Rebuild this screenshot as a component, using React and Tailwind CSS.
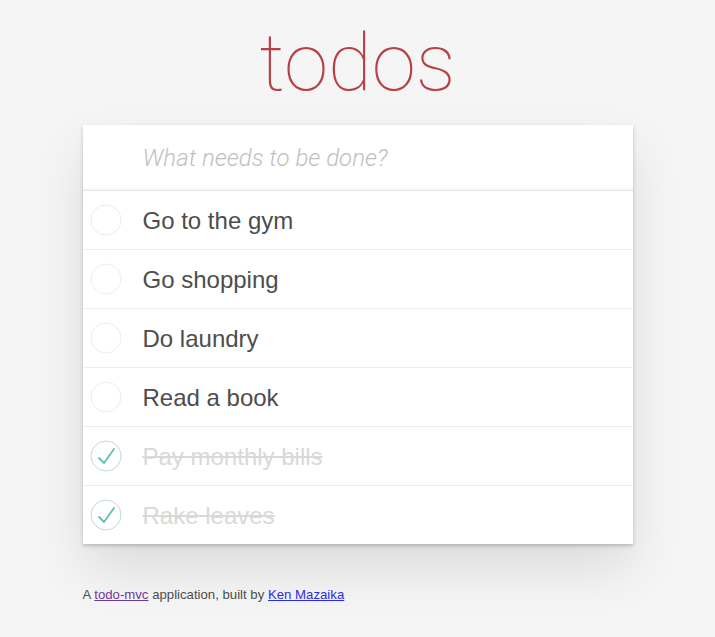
import React, { useState } from 'react'

const initialTodos = [
  { id: 1, title: 'Go to the gym', done: false },
  { id: 2, title: 'Go shopping', done: false },
  { id: 3, title: 'Do laundry', done: false },
  { id: 4, title: 'Read a book', done: false },
  { id: 5, title: 'Pay monthly bills', done: true },
  { id: 6, title: 'Rake leaves', done: true },
]

const Toggle = ({ done }) => (
  <svg width="32" height="32" viewBox="0 0 32 32" className="shrink-0">
    <circle cx="16" cy="16" r="15" fill="none" stroke={done ? '#bddad5' : '#ededed'} strokeWidth="1" />
    {done && (
      <path d="M9 18 L14 23 L24 9" fill="none" stroke="#5dc2af" strokeWidth="1.8" strokeLinecap="round" strokeLinejoin="round" />
    )}
  </svg>
)

const TodoItem = ({ todo, onToggle }) => (
  <li className="flex items-center h-[59px] border-b border-[#ededed] last:h-[58px] last:border-b-0">
    <button type="button" onClick={() => onToggle(todo.id)} className="ml-[7px] w-[32px] h-[32px] flex items-center justify-center">
      <Toggle done={todo.done} />
    </button>
    <label
      className={
        'ml-[21px] text-[24px] leading-[29px] ' +
        (todo.done ? 'text-[#d9d9d9] line-through' : 'text-[#4d4d4d]')
      }
    >
      {todo.title}
    </label>
  </li>
)

const App = () => {
  const [todos, setTodos] = useState(initialTodos)
  const [text, setText] = useState('')

  const toggle = (id) => {
    setTodos(todos.map(t => (t.id === id ? { ...t, done: !t.done } : t)))
  }

  const add = (e) => {
    e.preventDefault()
    if (!text.trim()) return
    setTodos([...todos, { id: Date.now(), title: text.trim(), done: false }])
    setText('')
  }

  return (
    <div className="min-h-screen bg-[#f5f5f5] font-['Liberation_Sans',Arial,sans-serif]">
      <div className="max-w-[550px] mx-auto">
        <h1 className="pt-[23px] text-center text-[80px] leading-[80px] font-thin text-[#b83f45] font-['Roboto',sans-serif]">
          todos
        </h1>
        <section className="mt-[22px] bg-white shadow-[0_2px_4px_rgba(0,0,0,0.2),0_25px_50px_rgba(0,0,0,0.1)]">
          <form onSubmit={add}>
            <input
              value={text}
              onChange={e => setText(e.target.value)}
              placeholder="What needs to be done?"
              className="w-full h-[65px] pl-[60px] pr-4 text-[24px] text-[#4d4d4d] outline-none bg-transparent placeholder:italic placeholder:font-light placeholder:text-[#bfbfbf] font-['Roboto',sans-serif] shadow-[inset_0_-2px_1px_rgba(0,0,0,0.03)]"
            />
          </form>
          <ul className="border-t border-[#e6e6e6]">
            {todos.map(t => (
              <TodoItem key={t.id} todo={t} onToggle={toggle} />
            ))}
          </ul>
        </section>
        <footer className="mt-[43px] text-[13.2px] leading-[15px] text-[#4d4d4d]">
          A <a href="#" className="underline text-[#6b3a9a]">todo-mvc</a> application, built by{' '}
          <a href="#" className="underline text-[#2b2bef]">Ken Mazaika</a>
        </footer>
      </div>
    </div>
  )
}

export default App
